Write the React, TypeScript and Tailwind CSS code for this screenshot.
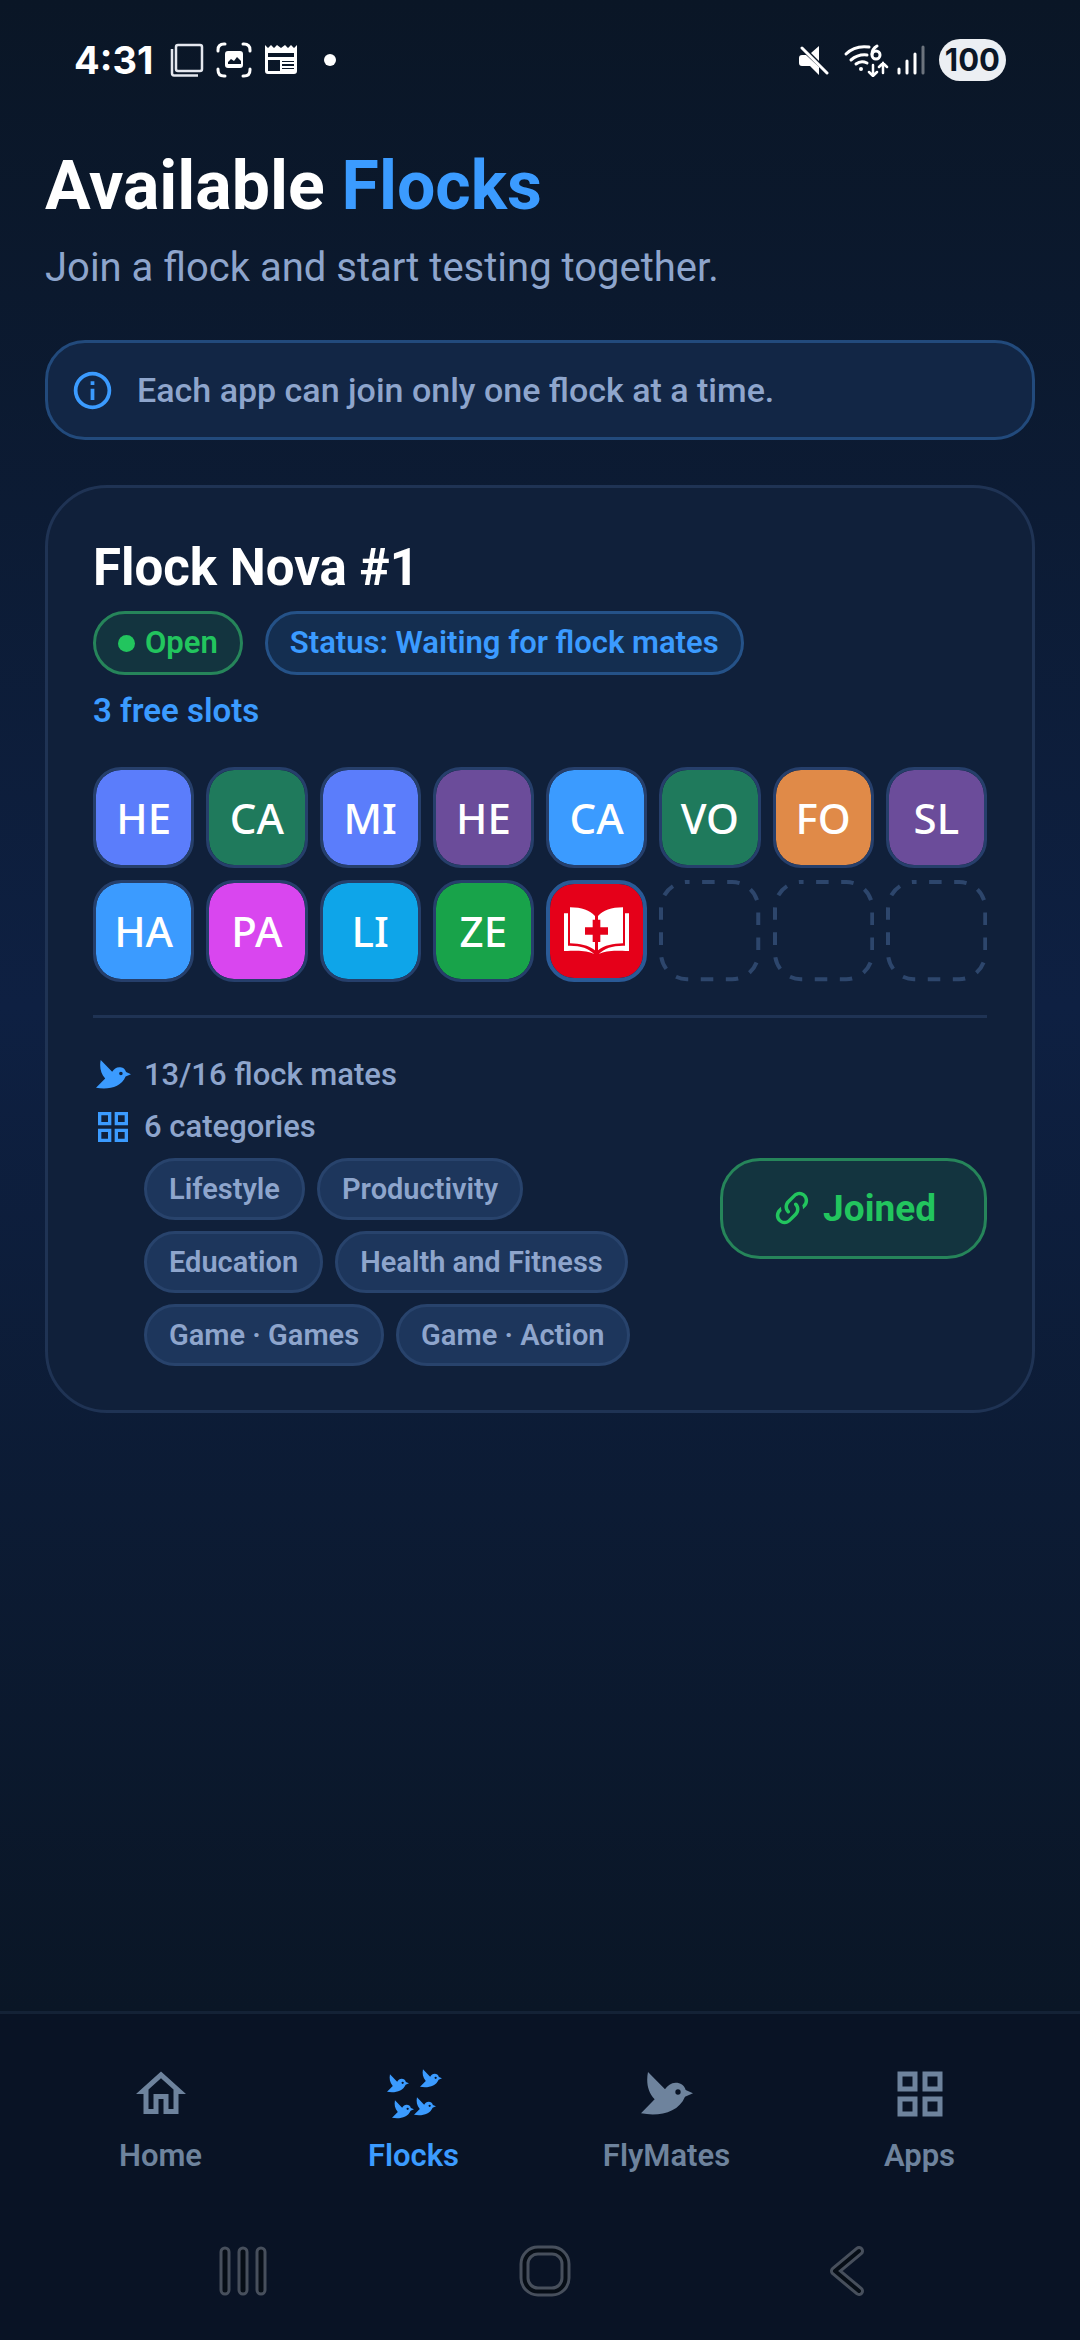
import { clsx } from 'clsx';
import { ReactNode } from 'react';

interface Tile {
  label: string;
  color: string;
}

const tiles: Tile[] = [
  { label: 'HE', color: 'bg-[#5b7dfb]' },
  { label: 'CA', color: 'bg-[#1f7a5c]' },
  { label: 'MI', color: 'bg-[#5b7dfb]' },
  { label: 'HE', color: 'bg-[#6b4c9a]' },
  { label: 'CA', color: 'bg-[#3b9bff]' },
  { label: 'VO', color: 'bg-[#1f7a5c]' },
  { label: 'FO', color: 'bg-[#e08a48]' },
  { label: 'SL', color: 'bg-[#6b4c9a]' },
  { label: 'HA', color: 'bg-[#3b9bff]' },
  { label: 'PA', color: 'bg-[#d946ef]' },
  { label: 'LI', color: 'bg-[#0ea5e9]' },
  { label: 'ZE', color: 'bg-[#18a34a]' },
];

const categories = [
  'Lifestyle',
  'Productivity',
  'Education',
  'Health and Fitness',
  'Game · Games',
  'Game · Action',
];

const BIRD =
  'M21 0C15 30 20 60 41 82L0 124C55 134 112 122 132 74L156 64L134 54C130 38 118 32 104 32C90 32 80 41 72 52ZM111 52A8 8 0 1 1 111 68A8 8 0 1 1 111 52Z';

function BirdIcon({ className }: { className?: string }) {
  return (
    <svg viewBox="0 0 156 130" className={className} fill="currentColor" fillRule="evenodd" aria-hidden="true">
      <path d={BIRD} />
    </svg>
  );
}

function FlockIcon({ className }: { className?: string }) {
  return (
    <svg viewBox="0 0 180 180" className={className} fill="currentColor" fillRule="evenodd" aria-hidden="true">
      <path transform="translate(9 31) scale(.423)" d={BIRD} />
      <path transform="translate(108 16) scale(.423)" d={BIRD} />
      <path transform="translate(24 109) scale(.423)" d={BIRD} />
      <path transform="translate(90 100) scale(.423)" d={BIRD} />
    </svg>
  );
}

function GridIcon({ className }: { className?: string }) {
  return (
    <svg viewBox="0 0 24 24" className={className} fill="currentColor" fillRule="evenodd" aria-hidden="true">
      <path d="M3 3H11V11H3ZM5 5V9H9V5ZM13 3H21V11H13ZM15 5V9H19V5ZM3 13H11V21H3ZM5 15V19H9V15ZM13 13H21V21H13ZM15 15V19H19V15Z" />
    </svg>
  );
}

function HomeIcon({ className }: { className?: string }) {
  return (
    <svg viewBox="0 0 24 24" className={className} fill="currentColor" aria-hidden="true">
      <path d="M12 5.69L17 10.19V18H15V12H9V18H7V10.19L12 5.69M12 3L2 12H5V20H11V14H13V20H19V12H22L12 3Z" />
    </svg>
  );
}

function InfoIcon({ className }: { className?: string }) {
  return (
    <svg viewBox="0 0 24 24" className={className} fill="currentColor" aria-hidden="true">
      <path d="M11 9H13V7H11M12 20C7.59 20 4 16.41 4 12S7.59 4 12 4 20 7.59 20 12 16.41 20 12 20M12 2A10 10 0 0 0 2 12A10 10 0 0 0 12 22A10 10 0 0 0 22 12A10 10 0 0 0 12 2M11 17H13V11H11V17Z" />
    </svg>
  );
}

function LinkIcon({ className }: { className?: string }) {
  return (
    <svg viewBox="0 0 24 24" className={className} fill="currentColor" aria-hidden="true">
      <path d="M10.59,13.41C11,13.8 11,14.44 10.59,14.83C10.2,15.22 9.56,15.22 9.17,14.83C7.22,12.88 7.22,9.71 9.17,7.76V7.76L12.71,4.22C14.66,2.27 17.83,2.27 19.78,4.22C21.73,6.17 21.73,9.34 19.78,11.29L18.29,12.78C18.3,11.96 18.17,11.14 17.89,10.36L18.36,9.88C19.54,8.71 19.54,6.81 18.36,5.64C17.19,4.46 15.29,4.46 14.12,5.64L10.59,9.17C9.41,10.34 9.41,12.24 10.59,13.41M13.41,9.17C13.8,8.78 14.44,8.78 14.83,9.17C16.78,11.12 16.78,14.29 14.83,16.24V16.24L11.29,19.78C9.34,21.73 6.17,21.73 4.22,19.78C2.27,17.83 2.27,14.66 4.22,12.71L5.71,11.22C5.7,12.04 5.83,12.86 6.11,13.65L5.64,14.12C4.46,15.29 4.46,17.19 5.64,18.36C6.81,19.54 8.71,19.54 9.88,18.36L13.41,14.83C14.59,13.66 14.59,11.76 13.41,10.59C13,10.2 13,9.56 13.41,9.17Z" />
    </svg>
  );
}

function BookIcon({ className }: { className?: string }) {
  const half =
    'M18 1C53 1 78 11 93 27V38H86V61H63V83H86V105H93V130C73 114 48 110 18 109ZM0 19H12V116C48 115 73 123 91 141C68 130 48 130 0 132Z';
  return (
    <svg viewBox="0 0 195 141" className={className} fill="currentColor" aria-hidden="true">
      <path d={half} />
      <path d={half} transform="translate(195 0) scale(-1 1)" />
    </svg>
  );
}

function StatusBar() {
  return (
    <header className="flex h-30 items-center justify-between pr-[74px] pl-[74px] font-[Inter,sans-serif] font-bold text-white">
      <div className="flex items-center">
        <span className="w-20 text-[38px] leading-10">4:31</span>
        <svg viewBox="0 0 34 34" className="ml-4 size-[34px]" fill="none" stroke="#e4e7ee" strokeWidth="2.500" aria-hidden="true">
          <rect x="6" y="2" width="26" height="26" rx="2" />
          <path d="M2 6V30Q2 32.500 4 32.500H28" />
        </svg>
        <svg viewBox="0 0 36 36" className="ml-3 size-9" fill="none" stroke="white" strokeWidth="3" strokeLinecap="round" aria-hidden="true">
          <path d="M2 9V8Q2 2 8 2H9M27 2H28Q34 2 34 8V9M34 27V28Q34 34 28 34H27M9 34H8Q2 34 2 28V27" />
          <path
            fill="white"
            fillRule="evenodd"
            stroke="none"
            d="M12 9H24Q27 9 27 12V23Q27 26 24 26H12Q9 26 9 23V12Q9 9 12 9ZM12 22V20L15 17L18 19L21 15L25 19V22Z"
          />
        </svg>
        <svg viewBox="0 0 34 32" className="ml-3 h-8 w-[34px]" aria-hidden="true">
          <path
            fill="white"
            fillRule="evenodd"
            d="M1 1L4 4L7 1L10 4L13 1L17 4L21 1L24 4L27 1L30 4L33 1V27Q33 30 30 30H4Q1 30 1 27ZM4 9V13H30V9ZM4 16V27H16V16ZM18 17V18H30V17ZM18 20V22H30V20ZM18 24V25H30V24Z"
          />
        </svg>
        <span className="ml-[26px] size-3 rounded-full bg-white" />
      </div>
      <div className="flex items-center">
        <svg viewBox="0 0 30 30" className="size-[30px]" fill="white" aria-hidden="true">
          <path d="M3 10H7L20 22V30L11 21H3Q0 21 0 18V13Q0 10 3 10ZM12 8L20 1V16Z" />
          <path d="M3 3L28 28" stroke="white" strokeWidth="3" strokeLinecap="round" />
        </svg>
        <svg viewBox="0 0 46 34" className="ml-[14px] h-[34px] w-[46px]" fill="none" stroke="white" strokeWidth="3" strokeLinecap="round" aria-hidden="true">
          <path d="M3 11Q12 2 26 4M8 17Q15 11 24 12M13 21Q18 17 24 20" />
          <circle cx="18" cy="26" r="2" fill="white" stroke="none" />
          <path d="M34 3Q29 6 29 11" />
          <circle cx="33" cy="12" r="4" />
          <path d="M30 22V32M26 29L30 33L34 29M40 30V20M36 24L40 20L44 24" strokeWidth="2.500" />
        </svg>
        <svg viewBox="0 0 28 30" className="ml-2 h-[30px] w-7" stroke="white" strokeWidth="3" strokeLinecap="round" aria-hidden="true">
          <path d="M2 24V28M10 16V28M18 9V28" />
          <path d="M26 2V28" opacity=".4" />
        </svg>
        <span className="ml-[14px] rounded-full bg-[#eceff3] px-1.5 text-[31px] leading-[42px] text-[#0b1626]">100</span>
      </div>
    </header>
  );
}

function AppTile({ label, color }: Tile) {
  return (
    <li
      className={clsx(
        'flex aspect-square items-center justify-center rounded-[28px] border-3 border-[#263f6b] bg-clip-padding font-["Noto_Sans",sans-serif] text-[42px] leading-none font-medium text-white',
        color,
      )}
    >
      {label}
    </li>
  );
}

function EmptyTile() {
  return (
    <li className="aspect-square">
      <svg viewBox="0 0 101 101" className="size-full" aria-hidden="true">
        <rect
          x="2"
          y="2"
          width="97"
          height="97"
          rx="26"
          fill="none"
          stroke="#2d466c"
          strokeWidth="4"
          strokeDasharray="12.5 12.5"
          strokeDashoffset="10"
        />
      </svg>
    </li>
  );
}

function MetaRow({ icon, children }: { icon: ReactNode; children: ReactNode }) {
  return (
    <div className="flex items-center text-[31px] leading-[42px] font-medium text-[#8ea5cc]">
      <span className="flex w-[51px] items-center pl-[3px] text-[#3b9bff]">{icon}</span>
      {children}
    </div>
  );
}

function FlockCard() {
  return (
    <section className="mt-[45px] rounded-[62px] border-3 border-[#1f3354] bg-[#10203a] px-[45px] pt-12 pb-11">
      <h2 className="text-[51px] leading-16 font-bold text-white">Flock Nova #1</h2>
      <div className="mt-[11px] flex gap-[22px] text-[31px] leading-[58px] font-semibold">
        <span className="flex items-center gap-2.5 rounded-full border-3 border-[#26855a] bg-[#13343f] px-[22px] text-[#22c55e]">
          <span className="size-[17px] rounded-full bg-[#22c55e]" />
          Open
        </span>
        <span className="rounded-full border-3 border-[#255288] bg-[#142e50] px-[22px] text-[#3b9bff]">
          Status: Waiting for flock mates
        </span>
      </div>
      <p className="mt-3.5 text-[33px] leading-11 font-semibold text-[#3b9bff]">3 free slots</p>

      <ul className="mt-[34px] grid grid-cols-8 gap-3">
        {tiles.map((tile, i) => (
          <AppTile key={i} {...tile} />
        ))}
        <li className="flex aspect-square items-center justify-center rounded-[28px] border-4 border-[#2a5a96] bg-[#e50019] bg-clip-padding text-white">
          <BookIcon className="w-[65px]" />
        </li>
        <EmptyTile />
        <EmptyTile />
        <EmptyTile />
      </ul>

      <div className="mt-[33px] border-t-3 border-[#1f3354] pt-9">
        <MetaRow icon={<BirdIcon className="w-[35px]" />}>13/16 flock mates</MetaRow>
        <div className="mt-2.5">
          <MetaRow icon={<GridIcon className="-ml-[3px] size-10" />}>6 categories</MetaRow>
        </div>
        <div className="mt-2.5 flex items-start gap-6 pl-[51px]">
          <ul className="flex min-w-0 flex-1 flex-wrap gap-x-3 gap-y-[11px]">
            {categories.map((name) => (
              <li
                key={name}
                className="rounded-full border-3 border-[#28436c] bg-[#1d365c] px-[22px] text-[29px] leading-14 font-semibold text-[#8ea5cc]"
              >
                {name}
              </li>
            ))}
          </ul>
          <button
            type="button"
            className="flex items-center gap-2.5 rounded-[40px] border-3 border-[#26855a] bg-[#13343f] px-12 text-[37px] leading-[95px] font-bold text-[#22c55e]"
          >
            <LinkIcon className="size-[42px]" />
            Joined
          </button>
        </div>
      </div>
    </section>
  );
}

function NavItem({ label, active, icon }: { label: string; active?: boolean; icon: ReactNode }) {
  return (
    <a
      href="#"
      aria-current={active ? 'page' : undefined}
      className={clsx(
        'flex flex-col items-center gap-3 text-[31px] leading-10 font-semibold',
        active ? 'text-[#3b9bff]' : 'text-[#6e839d]',
      )}
    >
      <span className="flex size-15 items-center justify-center">{icon}</span>
      {label}
    </a>
  );
}

function SystemNav() {
  return (
    <div className="grid h-[138px] grid-cols-3 place-items-center pr-[82px] pl-[92px]">
      <button type="button" aria-label="Recents">
        <svg viewBox="0 0 48 50" className="h-[50px] w-12" fill="#060d16" stroke="#474f5c" strokeWidth="3">
          <rect x="2" y="2" width="8" height="46" rx="4" />
          <rect x="20" y="2" width="8" height="46" rx="4" />
          <rect x="38" y="2" width="8" height="46" rx="4" />
        </svg>
      </button>
      <button type="button" aria-label="Home">
        <svg viewBox="0 0 52 52" className="size-[52px]" fill="#060d16" stroke="#474f5c" strokeWidth="3">
          <rect x="2" y="2" width="48" height="48" rx="17" />
          <rect x="9" y="9" width="34" height="34" rx="10" fill="#091325" />
        </svg>
      </button>
      <button type="button" aria-label="Back">
        <svg viewBox="0 0 36 52" className="h-[52px] w-9" fill="none" strokeLinecap="round" strokeLinejoin="round">
          <path d="M30 6L6 26L30 46" stroke="#474f5c" strokeWidth="10" />
          <path d="M30 6L6 26L30 46" stroke="#060d16" strokeWidth="4" />
        </svg>
      </button>
    </div>
  );
}

export default function App() {
  return (
    <div className="flex min-h-screen flex-col bg-[#091325] font-[Roboto,sans-serif]">
      <div className="flex-1 bg-linear-to-b from-[#0a1626] via-[#0e2042] to-[#0a1626]">
        <StatusBar />
        <main className="px-[45px] pt-[25px] pb-12">
          <h1 className="text-[68px] leading-[82px] font-bold text-white">
            Available <span className="text-[#3b9bff]">Flocks</span>
          </h1>
          <p className="mt-[17px] text-[40px] leading-12 text-[#8ea5cc]">Join a flock and start testing together.</p>
          <div className="mt-12 flex items-center gap-[22px] rounded-[40px] border-3 border-[#224a7c] bg-[#122645] px-[22px] py-[27px]">
            <InfoIcon className="-my-1 size-[45px] text-[#3b9bff]" />
            <p className="text-[34px] leading-10 font-medium text-[#8ea5cc]">
              Each app can join only one flock at a time.
            </p>
          </div>
          <FlockCard />
        </main>
      </div>
      <footer className="border-t-3 border-[#142236]">
        <nav className="grid grid-cols-4 px-[34px] pt-[50px] pb-[26px]">
          <NavItem label="Home" icon={<HomeIcon className="size-15" />} />
          <NavItem label="Flocks" active icon={<FlockIcon className="size-15" />} />
          <NavItem label="FlyMates" icon={<BirdIcon className="w-[52px]" />} />
          <NavItem label="Apps" icon={<GridIcon className="size-15" />} />
        </nav>
        <SystemNav />
      </footer>
    </div>
  );
}
